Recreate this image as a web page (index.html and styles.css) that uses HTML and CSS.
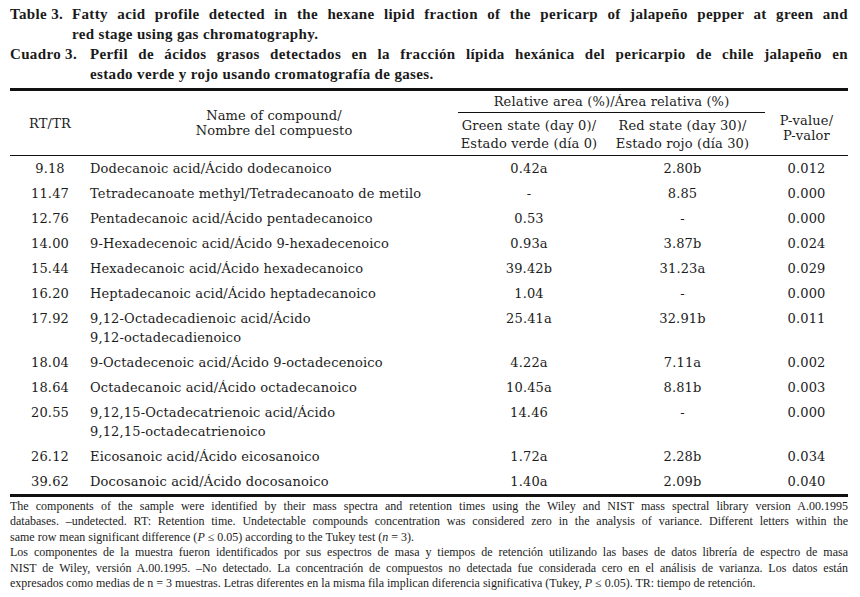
FILE: index.html
```html
<!DOCTYPE html>
<html lang="en">
<head>
<meta charset="utf-8">
<title>Table 3</title>
<link rel="stylesheet" href="styles.css">
</head>
<body>
<div class="page">
  <div class="caption">
    <div class="cap-label cap-label-en">Table 3.</div>
    <div class="cap-text">
      <span class="cap-line cap-full">Fatty acid profile detected in the hexane lipid fraction of the pericarp of jalapeño pepper at green and</span>
      <span class="cap-line">red stage using gas chromatography.</span>
    </div>
  </div>
  <div class="caption">
    <div class="cap-label cap-label-es">Cuadro 3.</div>
    <div class="cap-text">
      <span class="cap-line cap-full">Perfil de ácidos grasos detectados en la fracción lípida hexánica del pericarpio de chile jalapeño en</span>
      <span class="cap-line">estado verde y rojo usando cromatografía de gases.</span>
    </div>
  </div>

  <table class="data">
    <colgroup>
      <col class="c-rt"><col class="c-name"><col class="c-green"><col class="c-red"><col class="c-p">
    </colgroup>
    <thead>
      <tr>
        <th rowspan="2" class="h-rt">RT/TR</th>
        <th rowspan="2" class="h-name">Name of compound/<br>Nombre del compuesto</th>
        <th colspan="2" class="h-group">Relative area (%)/Área relativa (%)</th>
        <th rowspan="2" class="h-p">P-value/<br>P-valor</th>
      </tr>
      <tr>
        <th class="h-sub">Green state (day 0)/<br>Estado verde (día 0)</th>
        <th class="h-sub">Red state (day 30)/<br>Estado rojo (día 30)</th>
      </tr>
    </thead>
    <tbody>
      <tr><td class="rt">9.18</td><td class="name">Dodecanoic acid/Ácido dodecanoico</td><td class="num">0.42a</td><td class="num">2.80b</td><td class="num">0.012</td></tr>
      <tr><td class="rt">11.47</td><td class="name">Tetradecanoate methyl/Tetradecanoato de metilo</td><td class="num">-</td><td class="num">8.85</td><td class="num">0.000</td></tr>
      <tr><td class="rt">12.76</td><td class="name">Pentadecanoic acid/Ácido pentadecanoico</td><td class="num">0.53</td><td class="num">-</td><td class="num">0.000</td></tr>
      <tr><td class="rt">14.00</td><td class="name">9-Hexadecenoic acid/Ácido 9-hexadecenoico</td><td class="num">0.93a</td><td class="num">3.87b</td><td class="num">0.024</td></tr>
      <tr><td class="rt">15.44</td><td class="name">Hexadecanoic acid/Ácido hexadecanoico</td><td class="num">39.42b</td><td class="num">31.23a</td><td class="num">0.029</td></tr>
      <tr><td class="rt">16.20</td><td class="name">Heptadecanoic acid/Ácido heptadecanoico</td><td class="num">1.04</td><td class="num">-</td><td class="num">0.000</td></tr>
      <tr><td class="rt">17.92</td><td class="name">9,12-Octadecadienoic acid/Ácido<br>9,12-octadecadienoico</td><td class="num">25.41a</td><td class="num">32.91b</td><td class="num">0.011</td></tr>
      <tr><td class="rt">18.04</td><td class="name">9-Octadecenoic acid/Ácido 9-octadecenoico</td><td class="num">4.22a</td><td class="num">7.11a</td><td class="num">0.002</td></tr>
      <tr><td class="rt">18.64</td><td class="name">Octadecanoic acid/Ácido octadecanoico</td><td class="num">10.45a</td><td class="num">8.81b</td><td class="num">0.003</td></tr>
      <tr><td class="rt">20.55</td><td class="name">9,12,15-Octadecatrienoic acid/Ácido<br>9,12,15-octadecatrienoico</td><td class="num">14.46</td><td class="num">-</td><td class="num">0.000</td></tr>
      <tr><td class="rt">26.12</td><td class="name">Eicosanoic acid/Ácido eicosanoico</td><td class="num">1.72a</td><td class="num">2.28b</td><td class="num">0.034</td></tr>
      <tr><td class="rt">39.62</td><td class="name">Docosanoic acid/Ácido docosanoico</td><td class="num">1.40a</td><td class="num">2.09b</td><td class="num">0.040</td></tr>
    </tbody>
  </table>

  <div class="notes">
    <p class="note">
      <span class="nl nl-full">The components of the sample were identified by their mass spectra and retention times using the Wiley and NIST mass spectral library version A.00.1995</span>
      <span class="nl nl-full">databases. –undetected. RT: Retention time. Undetectable compounds concentration was considered zero in the analysis of variance. Different letters within the</span>
      <span class="nl">same row mean significant difference (<i>P</i> ≤ 0.05) according to the Tukey test (<i>n</i> = 3).</span>
    </p>
    <p class="note">
      <span class="nl nl-full">Los componentes de la muestra fueron identificados por sus espectros de masa y tiempos de retención utilizando las bases de datos librería de espectro de masa</span>
      <span class="nl nl-full">NIST de Wiley, versión A.00.1995. –No detectado. La concentración de compuestos no detectada fue considerada cero en el análisis de varianza. Los datos están</span>
      <span class="nl">expresados como medias de n = 3 muestras. Letras diferentes en la misma fila implican diferencia significativa (Tukey, <i>P</i> ≤ 0.05). TR: tiempo de retención.</span>
    </p>
  </div>
</div>
</body>
</html>
```

FILE: styles.css
```css
html, body {
  margin: 0;
  padding: 0;
  background: #ffffff;
}

body {
  color: #1c1c1c;
  font-family: "DejaVu Serif", "Liberation Serif", serif;
}

.page {
  width: 838px;
  padding: 4px 0 0 10px;
}

/* Captions */
.caption {
  display: flex;
  font-family: "Liberation Serif", "DejaVu Serif", serif;
  font-weight: bold;
  font-size: 15px;
  line-height: 20px;
  letter-spacing: 0.35px;
  color: #1a1a1a;
}

.cap-label-en {
  flex: 0 0 62px;
}

.cap-label-es {
  flex: 0 0 80px;
}

.cap-text {
  flex: 1 1 auto;
  min-width: 0;
}

.cap-line {
  display: block;
  white-space: nowrap;
}

.cap-full {
  text-align: justify;
  text-align-last: justify;
  white-space: normal;
}

/* Table */
.data {
  width: 838px;
  margin-top: 4px;
  border-collapse: collapse;
  table-layout: fixed;
  font-size: 13px;
  letter-spacing: 0.15px;
  border-top: 3px solid #111;
  border-bottom: 3px solid #111;
}

.c-rt { width: 80px; }
.c-name { width: 368px; }
.c-green { width: 142px; }
.c-red { width: 165px; }
.c-p { width: 83px; }

.data th {
  font-weight: normal;
  padding: 0;
  text-align: center;
  vertical-align: middle;
}

.data thead tr:last-child th,
.data .h-rt,
.data .h-name,
.data .h-p {
  border-bottom: 1px solid #111;
}

.data .h-rt,
.data .h-name {
  line-height: 15px;
}

.data .h-p {
  line-height: 15px;
  padding-top: 10px;
}

.data .h-group {
  line-height: 15px;
  padding: 3px 0 3px;
  border-bottom: 1px solid #111;
}

.data .h-sub {
  line-height: 18px;
  padding: 4px 0 2px;
}

.data td {
  padding: 3px 0;
  line-height: 19px;
  vertical-align: top;
  white-space: nowrap;
}

.data td.rt {
  text-align: center;
}

.data td.num {
  text-align: center;
}

.data td.name {
  text-align: left;
}

/* Notes */
.notes {
  padding-top: 2px;
  font-family: "Liberation Serif", "DejaVu Serif", serif;
  font-size: 12px;
  line-height: 15.4px;
}

.note {
  margin: 0;
}

.nl {
  display: block;
  white-space: nowrap;
}

.nl-full {
  white-space: normal;
  text-align: justify;
  text-align-last: justify;
}
```
